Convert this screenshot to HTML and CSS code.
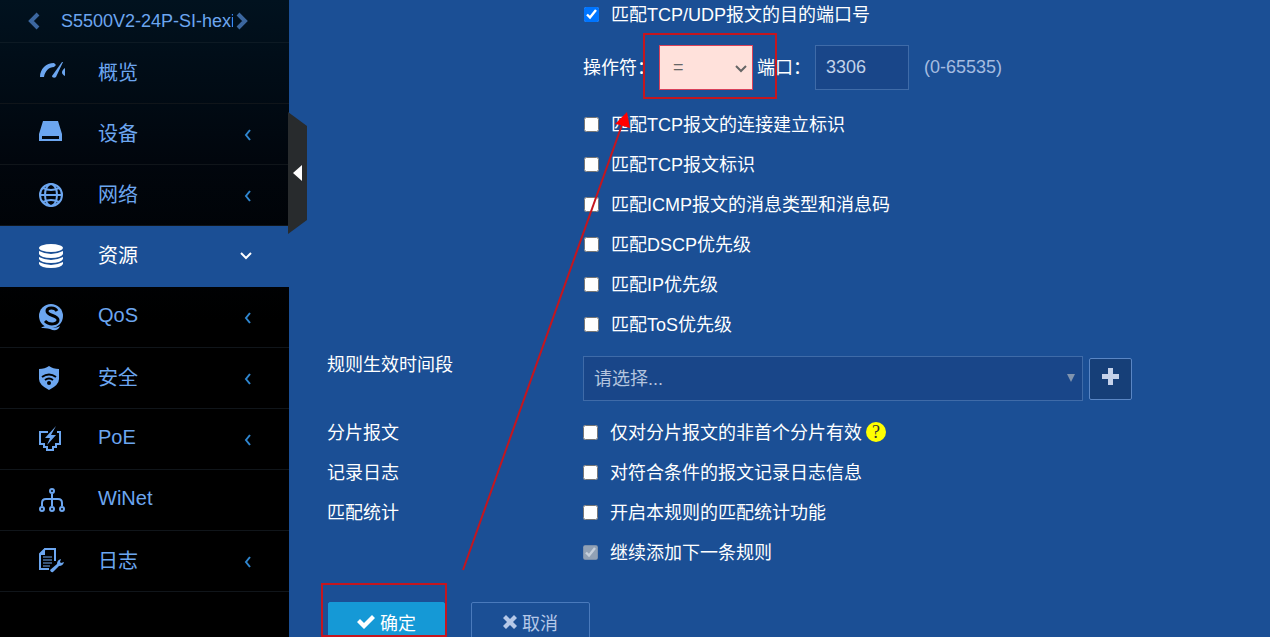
FILE: index.html
```html
<!DOCTYPE html>
<html lang="zh-CN">
  <head>
    <meta charset="UTF-8" />
    <title>S5500V2-24P-SI</title>
    <link rel="stylesheet" href="styles.css">
  </head>
  <body>
    <div class="wrapper">
      <!-- 左侧菜单 -->
      <nav class="sidebar">
        <div class="device">
          <button class="device-btn" type="button" aria-label="上一个">
            <svg width="12" height="18" viewBox="0 0 12 18"><path d="M10 2L3 9l7 7" /></svg>
          </button>
          <span class="device-name">S5500V2-24P-SI-hexin</span>
          <button class="device-btn" type="button" aria-label="下一个">
            <svg width="12" height="18" viewBox="0 0 12 18"><path d="M2 2l7 7-7 7" /></svg>
          </button>
        </div>
        <ul class="menu">
          <li>
            <a href="#">
              <svg class="icon" width="28" height="28" viewBox="0 0 28 28">
                <path d="M1 18C1 10 7 4 15 4l2 2-2 2c-5 0-9 4-10 10z" />
                <path d="M23 3h1l-7 15c-1 1-4 1-4-1z" />
                <path d="M26 9c-4 3-4 6 0 8z" />
              </svg>
              <span>概览</span>
            </a>
          </li>
          <li>
            <a href="#">
              <svg class="icon" width="28" height="28" viewBox="0 0 28 28">
                <path fill-rule="evenodd" d="M4 1h15l4 13v7H0v-7zM3 16v3h17v-3z" />
              </svg>
              <span>设备</span>
              <svg class="arrow" width="8" height="12" viewBox="0 0 8 12"><path d="M6 1L2 6l4 5" /></svg>
            </a>
          </li>
          <li>
            <a href="#">
              <svg class="icon globe" width="28" height="28" viewBox="0 0 28 28">
                <circle cx="12" cy="14" r="11" />
                <ellipse cx="12" cy="14" rx="6" ry="11" />
                <path d="M1 14h22M4 7q8 4 16 0M4 21q8-4 16 0" />
              </svg>
              <span>网络</span>
              <svg class="arrow" width="8" height="12" viewBox="0 0 8 12"><path d="M6 1L2 6l4 5" /></svg>
            </a>
          </li>
          <li class="active">
            <a href="#">
              <svg class="icon" width="28" height="28" viewBox="0 0 28 28">
                <ellipse cx="12" cy="6" rx="12" ry="4" />
                <path d="M0 9q12 6 24 0v3q-2 4-12 4T0 12zM0 15q12 6 24 0v2q-2 4-12 4T0 17zM0 20q12 6 24 0v2q-2 4-12 4T0 22z" />
              </svg>
              <span>资源</span>
              <svg class="arrow" width="12" height="8" viewBox="0 0 12 8"><path d="M1 1l5 5 5-5" /></svg>
            </a>
          </li>
          <li>
            <a href="#">
              <svg class="icon" width="28" height="28" viewBox="0 0 28 28">
                <circle cx="12" cy="13" r="12" />
                <path class="cut" d="M18 8C16 4 8 4 8 8c0 5 11 4 11 9 0 4-8 6-13 1" />
                <path d="M2 25c4-3 7-2 10-1s6 1 9-1c-2 5-6 5-10 3-3-1-6-1-9-1z" />
              </svg>
              <span>QoS</span>
              <svg class="arrow" width="8" height="12" viewBox="0 0 8 12"><path d="M6 1L2 6l4 5" /></svg>
            </a>
          </li>
          <li>
            <a href="#">
              <svg class="icon" width="28" height="28" viewBox="0 0 28 28">
                <path d="M10 2q4 3 10 3v10q0 6-10 11Q0 21 0 15V5q6 0 10-3z" />
                <path class="cut thin" d="M3 13q7-5 14 0M6 16q4-3 8 0" />
                <circle class="hole" cx="10" cy="19" r="2" />
              </svg>
              <span>安全</span>
              <svg class="arrow" width="8" height="12" viewBox="0 0 8 12"><path d="M6 1L2 6l4 5" /></svg>
            </a>
          </li>
          <li>
            <a href="#">
              <svg class="icon" width="28" height="28" viewBox="0 0 28 28">
                <path class="bold" d="M9 7H1v12h4v3h3v3h6v-3h3v-3h4V7h-3" />
                <path d="M17 1L6 13h5L8 20l9-10h-5z" />
              </svg>
              <span>PoE</span>
              <svg class="arrow" width="8" height="12" viewBox="0 0 8 12"><path d="M6 1L2 6l4 5" /></svg>
            </a>
          </li>
          <li>
            <a href="#">
              <svg class="icon bold" width="28" height="28" viewBox="0 0 28 28">
                <circle cx="13" cy="5" r="2" />
                <circle cx="3" cy="23" r="2" />
                <circle cx="13" cy="23" r="2" />
                <circle cx="23" cy="23" r="2" />
                <path d="M13 8v12M3 20v-3q0-4 4-4h12q4 0 4 4v3" />
              </svg>
              <span>WiNet</span>
            </a>
          </li>
          <li>
            <a href="#">
              <svg class="icon" width="28" height="28" viewBox="0 0 28 28">
                <path class="bold" d="M10 22H1V7l5-5h10v12" />
                <path d="M0 8l6-7v7z" />
                <path class="line" d="M4 10h9M4 13h9M4 16h9M4 19h7" />
                <path d="M11 23l7-6q0-4 4-5l-1 3 1 1 3-1q-1 4-5 4l-6 6q-2 1-3-2z" />
              </svg>
              <span>日志</span>
              <svg class="arrow" width="8" height="12" viewBox="0 0 8 12"><path d="M6 1L2 6l4 5" /></svg>
            </a>
          </li>
        </ul>
        <!-- 收起菜单 -->
        <button class="fold" type="button" aria-label="收起菜单">
          <svg width="9" height="16" viewBox="0 0 9 16"><path d="M9 0v16L0 8z" /></svg>
        </button>
      </nav>

      <!-- 规则表单 -->
      <form class="content">
        <div class="match">
          <label class="check first"><input type="checkbox" checked /><span>匹配TCP/UDP报文的目的端口号</span></label>
          <div class="port">
            <label for="oper">操作符：</label>
            <div class="oper">
              <select id="oper" name="oper">
                <option>=</option>
              </select>
              <svg width="12" height="8" viewBox="0 0 12 8"><path d="M1 1l5 5 5-5" /></svg>
            </div>
            <label for="port">端口：</label>
            <input class="port-num" id="port" name="port" type="text" value="3306" />
            <span class="range">(0-65535)</span>
          </div>
          <label class="check"><input type="checkbox" /><span>匹配TCP报文的连接建立标识</span></label>
          <label class="check"><input type="checkbox" /><span>匹配TCP报文标识</span></label>
          <label class="check"><input type="checkbox" /><span>匹配ICMP报文的消息类型和消息码</span></label>
          <label class="check"><input type="checkbox" /><span>匹配DSCP优先级</span></label>
          <label class="check"><input type="checkbox" /><span>匹配IP优先级</span></label>
          <label class="check"><input type="checkbox" /><span>匹配ToS优先级</span></label>
        </div>

        <div class="row">
          <label class="title" for="time">规则生效时间段</label>
          <div class="time">
            <div class="time-box">
              <select id="time" name="time">
                <option>请选择...</option>
              </select>
              <svg width="8" height="8" viewBox="0 0 8 8"><path d="M0 0h8L4 8z" /></svg>
            </div>
            <button class="add" type="button" aria-label="添加">
              <svg width="17" height="17" viewBox="0 0 17 17"><path d="M6 0h5v6h6v5h-6v6H6v-6H0V6h6z" /></svg>
            </button>
          </div>
        </div>
        <div class="row">
          <span class="title">分片报文</span>
          <div class="cell">
            <label class="check"><input type="checkbox" /><span>仅对分片报文的非首个分片有效</span></label>
            <span class="help">?</span>
          </div>
        </div>
        <div class="row">
          <span class="title">记录日志</span>
          <label class="check"><input type="checkbox" /><span>对符合条件的报文记录日志信息</span></label>
        </div>
        <div class="row">
          <span class="title">匹配统计</span>
          <label class="check"><input type="checkbox" /><span>开启本规则的匹配统计功能</span></label>
        </div>
        <div class="row">
          <span class="title"></span>
          <label class="check"><input class="dim" type="checkbox" checked disabled /><span>继续添加下一条规则</span></label>
        </div>

        <div class="buttons">
          <button class="btn ok" type="submit">
            <svg width="18" height="14" viewBox="0 0 18 14"><path d="M0 7l3-3 4 4 8-8 3 3L7 14z" /></svg>
            确定
          </button>
          <button class="btn cancel" type="button">
            <svg width="14" height="14" viewBox="0 0 14 14"><path d="M3 0l4 4 4-4 3 3-4 4 4 4-3 3-4-4-4 4-3-3 4-4-4-4z" /></svg>
            取消
          </button>
        </div>
      </form>

      <!-- 操作提示标记 -->
      <svg class="mark" width="480" height="637" viewBox="0 0 480 637">
        <rect x="324" y="34" width="132" height="64" />
        <rect x="2" y="584" width="124" height="52" />
        <path d="M143 570L303 122" />
        <path class="head" d="M307 112l-12 12 5 1 10 3z" />
      </svg>
    </div>
  </body>
</html>
```
FILE: styles.css
```css
* {
  box-sizing: border-box;
}

body {
  margin: 0;
  overflow: hidden;
  font-family: "Liberation Sans", "Noto Sans CJK SC", sans-serif;
  font-size: 18px;
  color: #fff;
  background-color: #1b4f95;
}

button,
input,
select {
  font: inherit;
}

svg {
  display: block;
  flex: none;
}

.wrapper {
  position: relative;
  display: flex;
  height: 100vh; /* 브라우저 창 높이에 맞춘다 */
}

/* 메뉴 */
.sidebar {
  position: relative;
  flex: none;
  width: 289px;
  background: linear-gradient(#01121f, #01060d 160px, #000 320px);
}

.device {
  display: flex;
  align-items: center;
  height: 43px;
  padding: 0 41px 0 28px;
  border-bottom: 1px solid #0d1a24;
  color: #6ca6f0;
}

.device-name {
  flex: 1;
  margin-left: 21px;
  margin-right: 3px;
  overflow: hidden;
  white-space: nowrap;
}

.device-btn {
  padding: 0;
  border: 0;
  background: none;
}

.device-btn path {
  fill: none;
  stroke: #3c679f;
  stroke-width: 4;
}

.menu {
  margin: 0;
  padding: 0;
  list-style: none;
}

.menu li {
  height: 61px;
  border-bottom: 1px solid #10151a;
}

.menu a {
  display: flex;
  align-items: center;
  height: 60px;
  padding: 0 37px 0 39px;
  font-size: 20px;
  color: #6ca6f0;
  text-decoration: none;
}

.menu span {
  flex: 1;
  margin-left: 31px;
  padding-bottom: 3px;
}

.icon {
  fill: #6ca6f0;
}

.globe,
.line {
  fill: none;
  stroke: #6ca6f0;
  stroke-width: 1;
}

.globe,
.bold {
  fill: none;
  stroke: #6ca6f0;
  stroke-width: 2;
}

.cut {
  fill: none;
  stroke: #000;
  stroke-width: 3;
}

.thin {
  stroke-width: 2;
}

.hole {
  fill: #000;
}

.arrow {
  margin-top: 2px;
  fill: none;
  stroke: #2f86cf;
  stroke-width: 2;
}

.menu .active {
  border-color: #1b4f95;
  background-color: #1b4f95;
}

.active a {
  color: #fff;
}

.active .icon {
  fill: #fff;
}

.active .arrow {
  margin-top: 0;
  stroke: #fff;
}

.fold {
  position: absolute;
  left: 288px;
  top: 112px;
  display: flex;
  align-items: center;
  width: 19px;
  height: 122px;
  padding: 0 0 0 5px;
  border: 0;
  background-color: #282b2d;
  clip-path: polygon(0 0, 100% 14px, 100% 108px, 0 100%);
}

.fold path {
  fill: #fff;
}

/* 폼 */
.content {
  flex: 1;
  padding-left: 38px;
}

.match {
  padding-left: 256px;
}

.check {
  display: flex;
  align-items: center;
  gap: 12px;
  height: 40px;
}

.check input {
  width: 15px;
  height: 15px;
  margin: 0;
}

.check span,
.port label {
  padding-bottom: 3px;
}

.match .check {
  padding-left: 1px;
}

.first {
  height: 28px;
}

.dim {
  opacity: 0.9;
}

.port {
  display: flex;
  align-items: center;
  gap: 4px;
  height: 76px;
  padding-top: 2px;
}

.oper,
.time-box {
  position: relative;
}

.oper svg {
  position: absolute;
  right: 6px;
  top: 20px;
  fill: none;
  stroke: #666;
  stroke-width: 2;
}

.oper select,
.port-num {
  width: 94px;
  height: 45px;
  padding: 0 10px;
  border: 1px solid #3f6ba8;
  border-radius: 0;
  color: #c3d3ea;
  background-color: #194689;
}

.oper select {
  display: block;
  padding: 0 13px;
  border-color: #d9415a;
  color: #666;
  background-color: #ffe1db;
  appearance: none;
}

.range {
  margin-left: 11px;
  color: #a5bce0;
}

.row {
  display: flex;
}

.title {
  width: 256px;
  height: 40px;
  line-height: 43px;
}

.time {
  display: flex;
  flex: 1;
  align-items: center;
  gap: 6px;
  padding: 12px 0 11px;
}

.time-box {
  flex: 0 1 500px;
}

.time-box select {
  display: block;
  width: 100%;
  height: 45px;
  padding: 0 10px;
  border: 1px solid #3f6ba8;
  border-radius: 0;
  color: #b3c4de;
  background-color: #194689;
  appearance: none;
}

.time-box svg {
  position: absolute;
  right: 8px;
  top: 18px;
  fill: #8094ae;
}

.add {
  display: flex;
  align-items: center;
  justify-content: center;
  width: 43px;
  height: 42px;
  padding: 0 0 4px;
  border: 1px solid #5a86c4;
  border-radius: 2px;
  background-color: #163f78;
}

.add path {
  fill: #c5d2ea;
}

.cell {
  display: flex;
  align-items: center;
  gap: 4px;
}

.help {
  width: 20px;
  height: 20px;
  border-radius: 50%;
  font-family: "Liberation Serif", serif;
  line-height: 20px;
  text-align: center;
  color: #333;
  background-color: #ff0;
}

.buttons {
  display: flex;
  gap: 26px;
  padding: 30px 0 0 1px;
}

.btn {
  display: flex;
  align-items: center;
  justify-content: center;
  gap: 5px;
  width: 117px;
  height: 42px;
  padding: 0 0 2px;
  border: 1px solid #4a7abc;
  border-radius: 2px;
  color: #b5c8e8;
  background: none;
}

.btn path {
  fill: currentColor;
}

.ok {
  border-color: #1599d6;
  color: #fff;
  background-color: #1599d6;
}

.cancel {
  width: 119px;
}

/* 표시 */
.mark {
  position: absolute;
  left: 320px;
  top: 0;
  fill: none;
  stroke: #c4161f;
  stroke-width: 2;
  pointer-events: none;
}

.mark .head {
  fill: #f00;
  stroke: none;
}
```
